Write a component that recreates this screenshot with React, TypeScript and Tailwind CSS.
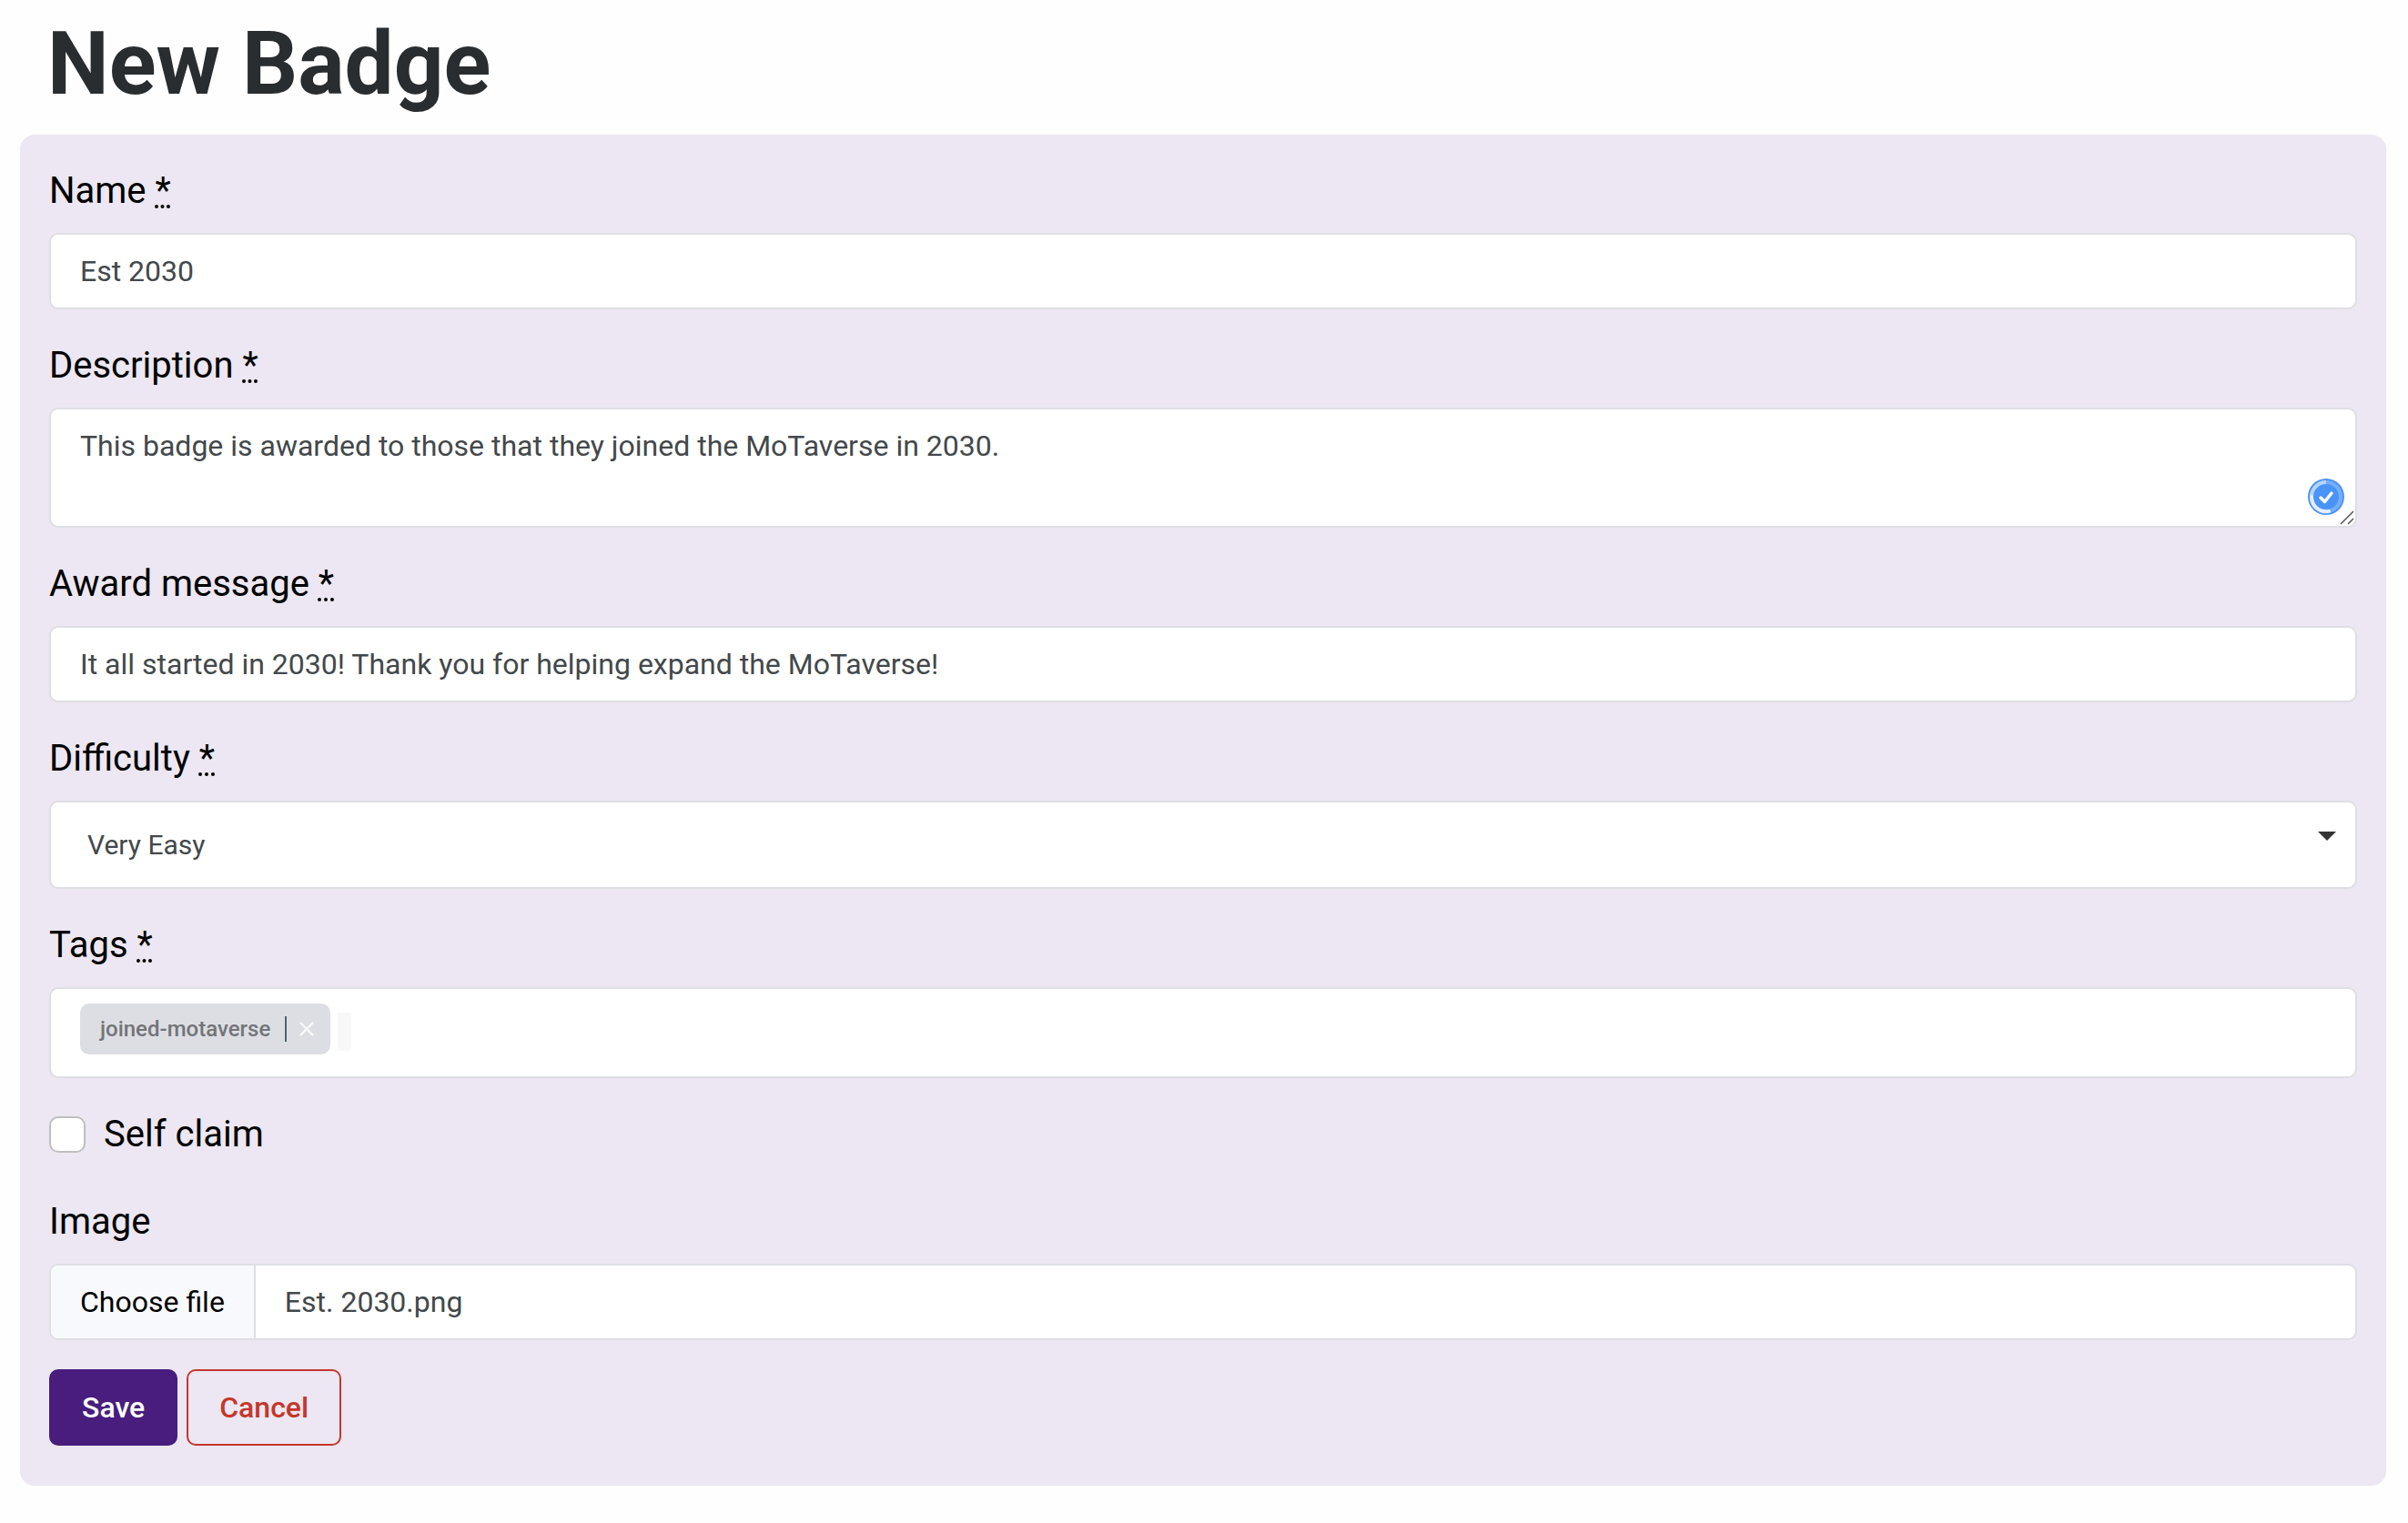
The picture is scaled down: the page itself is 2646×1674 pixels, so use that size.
import { useState } from "react"
import type { ReactNode } from "react"
import clsx from "clsx"

const control =
  "block w-full rounded-[10px] border-2 border-[#dedfe3] bg-white text-[32px] leading-[48px] text-[#43484b] outline-none"

interface FieldProps {
  id: string
  label: string
  required?: boolean
  children: ReactNode
}

function Field({ id, label, required = true, children }: FieldProps) {
  return (
    <div className="mb-8">
      <label htmlFor={id} className="mb-4 block text-[40px] leading-[60px] text-black">
        {label}
        {required && (
          <>
            {" "}
            <abbr title="required" className="underline decoration-dotted">*</abbr>
          </>
        )}
      </label>
      {children}
    </div>
  )
}

function CheckerBadge() {
  return (
    <svg viewBox="0 0 40 40" className="h-10 w-10">
      <circle cx="20" cy="20" r="20" fill="#4a94f8" />
      <circle cx="20" cy="20" r="16" fill="none" stroke="#76aff9" strokeWidth="4" />
      <path d="M20 4 A16 16 0 0 0 4 20" fill="none" stroke="#b5d4fc" strokeWidth="4" />
      <path d="M4 20 A16 16 0 0 0 23 36" fill="none" stroke="#e4effe" strokeWidth="4" strokeLinecap="round" />
      <path d="M14 21 L18.500 25.500 L26 16" fill="none" stroke="#fff" strokeWidth="3.500" strokeLinecap="round" strokeLinejoin="round" />
    </svg>
  )
}

export default function App() {
  const [name, setName] = useState("Est 2030")
  const [description, setDescription] = useState("This badge is awarded to those that they joined the MoTaverse in 2030.")
  const [message, setMessage] = useState("It all started in 2030! Thank you for helping expand the MoTaverse!")
  const [tags, setTags] = useState(["joined-motaverse"])
  const [fileName, setFileName] = useState("Est. 2030.png")

  return (
    <main className="min-h-screen bg-[#fefefe] px-[22px] pt-3 pb-10 font-[Roboto,sans-serif]">
      <h1 className="mb-5 px-[30px] text-[96px] leading-[116px] font-bold text-[#2a2d30]">New Badge</h1>

      <form
        className="mr-0.5 rounded-2xl bg-[#ece7f2] px-8 pt-8 pb-11"
        onSubmit={(e) => e.preventDefault()}
      >
        <Field id="name" label="Name">
          <input
            id="name"
            type="text"
            className={clsx(control, "px-8 py-4")}
            value={name}
            onChange={(e) => setName(e.target.value)}
          />
        </Field>

        <Field id="description" label="Description">
          <div className="relative">
            <textarea
              id="description"
              rows={2}
              className={clsx(control, "resize-none px-8 py-4")}
              value={description}
              onChange={(e) => setDescription(e.target.value)}
            />
            <div className="pointer-events-none absolute right-3.5 bottom-3.5">
              <CheckerBadge />
            </div>
            <svg viewBox="0 0 16 16" className="pointer-events-none absolute right-[3px] bottom-[3px] h-4 w-4">
              <path d="M1 15 L15 1 M9 15 L15 9" stroke="#555" strokeWidth="1.500" />
            </svg>
          </div>
        </Field>

        <Field id="message" label="Award message">
          <input
            id="message"
            type="text"
            className={clsx(control, "px-8 py-4")}
            value={message}
            onChange={(e) => setMessage(e.target.value)}
          />
        </Field>

        <Field id="difficulty" label="Difficulty">
          <div className="relative">
            <select
              id="difficulty"
              className="block w-full appearance-none rounded-[10px] border-2 border-[#dedfe3] bg-white px-10 py-6 text-[30px] leading-[45px] text-[#43484b] outline-none"
            >
              <option>Very Easy</option>
              <option>Easy</option>
              <option>Medium</option>
              <option>Hard</option>
            </select>
            <svg viewBox="0 0 20 10" className="pointer-events-none absolute top-[34px] right-[23px] h-2.5 w-5">
              <path d="M0 0 H20 L10 10 Z" fill="#333" />
            </svg>
          </div>
        </Field>

        <Field id="tags" label="Tags">
          <div className="flex min-h-[100px] items-start gap-2 rounded-[10px] border-2 border-[#dedfe3] bg-white px-8 py-4">
            {tags.map((tag) => (
              <span
                key={tag}
                className="flex h-14 items-center rounded-[10px] bg-[#dddee3] pr-[18px] pl-[22px] text-2xl font-medium text-[#737478]"
              >
                {tag}
                <button
                  type="button"
                  aria-label={`Remove ${tag}`}
                  className="ml-4 border-l-2 border-[#4c6571] py-1.5 pl-3.5"
                  onClick={() => setTags(tags.filter((t) => t !== tag))}
                >
                  <svg viewBox="0 0 16 16" className="h-4 w-4">
                    <path d="M1.500 1.500 L14.500 14.500 M14.500 1.500 L1.500 14.500" stroke="#fafafa" strokeWidth="2.400" strokeLinecap="round" />
                  </svg>
                </button>
              </span>
            ))}
            <input id="tags" type="text" className="mt-2.5 h-[42px] w-[15px] bg-[#f8f8f8] outline-none" />
          </div>
        </Field>

        <div className="mb-9 flex items-center gap-5">
          <input
            id="self-claim"
            type="checkbox"
            className="h-10 w-10 appearance-none rounded-[10px] border-2 border-[#bfbfbf] bg-white checked:bg-[#481d7d]"
          />
          <label htmlFor="self-claim" className="text-[40px] leading-[60px] text-black">
            Self claim
          </label>
        </div>

        <Field id="image" label="Image" required={false}>
          <label htmlFor="image" className={clsx(control, "relative flex overflow-hidden")}>
            <input
              id="image"
              type="file"
              className="sr-only"
              onChange={(e) => setFileName(e.target.files?.[0]?.name ?? "")}
            />
            <span className="border-r-2 border-[#dedfe3] bg-[#f8f9fc] px-8 py-4 text-black">Choose file</span>
            <span className="px-8 py-4">{fileName}</span>
          </label>
        </Field>

        <div className="flex gap-2.5">
          <button
            type="submit"
            className="rounded-[10px] border-2 border-[#481d7d] bg-[#481d7d] px-[34px] py-4 text-[32px] leading-[48px] font-medium text-white"
          >
            Save
          </button>
          <button
            type="button"
            className="rounded-[10px] border-2 border-[#c4372c] px-[34px] py-4 text-[32px] leading-[48px] font-medium text-[#c4372c]"
          >
            Cancel
          </button>
        </div>
      </form>
    </main>
  )
}
